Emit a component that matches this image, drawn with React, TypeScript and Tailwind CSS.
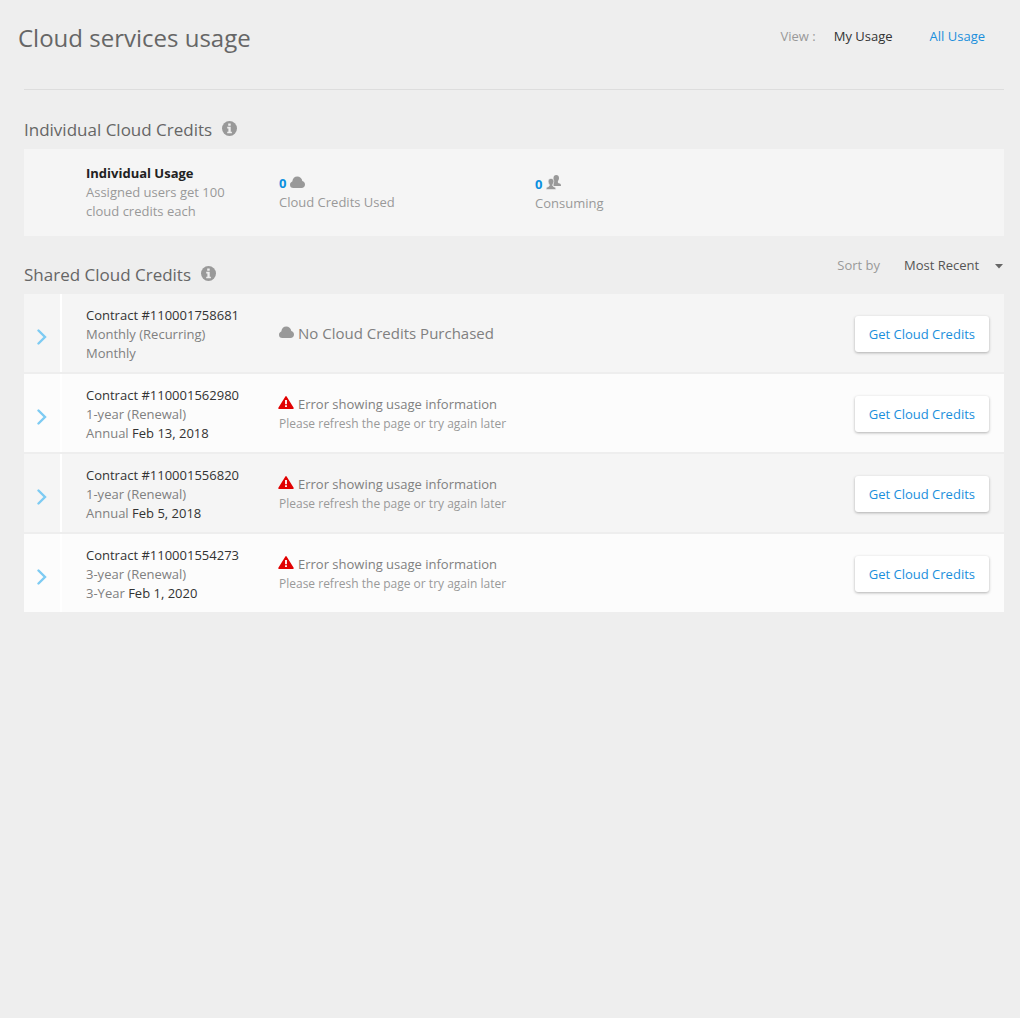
import { useState } from "react";

type Contract = {
  id: string;
  term: string;
  cycle: string;
  date?: string;
  failed: boolean;
};

const contracts: Contract[] = [
  { id: "110001758681", term: "Monthly (Recurring)", cycle: "Monthly", failed: false },
  { id: "110001562980", term: "1-year (Renewal)", cycle: "Annual", date: "Feb 13, 2018", failed: true },
  { id: "110001556820", term: "1-year (Renewal)", cycle: "Annual", date: "Feb 5, 2018", failed: true },
  { id: "110001554273", term: "3-year (Renewal)", cycle: "3-Year", date: "Feb 1, 2020", failed: true },
];

function InfoIcon() {
  return (
    <svg width="15" height="15" viewBox="0 0 15 15" aria-hidden="true">
      <circle cx="7.5" cy="7.5" r="7.5" fill="#999" />
      <path d="M6.2 2.5h2.5v2.2H6.2zM5.2 5.8h3.5v4.9h1.2v1.6H5.2v-1.6h1.2V7.4H5.2z" fill="#eee" />
    </svg>
  );
}

function CloudIcon() {
  return (
    <svg width="15" height="12" viewBox="0 0 15 12" fill="#999" aria-hidden="true">
      <path d="M3.4 12A3.4 3.4 0 0 1 0 8.7c0-1.5 1-2.7 2.3-3.1C2.6 2.4 4.6.5 7.3.5c2.5 0 4.5 1.6 5 4.4C13.9 5.3 15 6.8 15 8.4 15 10.4 13.5 12 11.5 12z" />
    </svg>
  );
}

function UsersIcon() {
  return (
    <svg width="15" height="15" viewBox="0 0 15 15" fill="#999" aria-hidden="true">
      <path d="M10.2 0c1.8 0 2.8 1.200 2.800 3 0 1.300-.5 2.300-1.100 3v1.400c.2.500.9.800 1.800 1.200.9.400 1.300 1 1.300 2.400H7.500V3C7.500 1.200 8.500 0 10.200 0z" />
      <path
        d="M5 3.400c1.800 0 2.800 1.200 2.800 3 0 1.300-.5 2.300-1.100 3v1.400c.2.500.9.800 1.800 1.200.9.400 1.300.9 1.300 2.600H.2c0-1.700.4-2.200 1.300-2.600.9-.4 1.600-.7 1.800-1.200V9.400c-.6-.7-1.100-1.700-1.100-3 0-1.800 1-3 2.800-3z"
        stroke="#f4f4f4"
        strokeWidth="0.6"
      />
    </svg>
  );
}

function WarningIcon() {
  return (
    <svg width="16" height="13" viewBox="0 0 16 13" aria-hidden="true">
      <path d="M8 .8 15 12.2H1z" fill="#e10000" stroke="#e10000" strokeWidth="1.5" strokeLinejoin="round" />
      <path d="M7.1 4h1.800v4.200H7.100zM7.100 9.200h1.800V11H7.100z" fill="#fff" />
    </svg>
  );
}

function ChevronIcon() {
  return (
    <svg width="10" height="16" viewBox="0 0 10 16" aria-hidden="true">
      <path d="M1.5 1.5 8 8l-6.500 6.500" fill="none" stroke="#7dcbf3" strokeWidth="2.4" strokeLinecap="round" />
    </svg>
  );
}

function SectionTitle({ children }: { children: string }) {
  return (
    <div className="flex items-center gap-2.5">
      <h2 className="text-[17px] leading-6 text-[#666]">{children}</h2>
      <button type="button" aria-label={`About ${children}`} className="-mt-1">
        <InfoIcon />
      </button>
    </div>
  );
}

function ContractRow({ contract }: { contract: Contract }) {
  return (
    <li className="flex min-h-[78px] bg-[#f5f5f5] text-[13px] leading-[19px] even:bg-[#fcfcfc]">
      <button
        type="button"
        aria-label={`Expand contract ${contract.id}`}
        className="flex w-[38px] shrink-0 items-center justify-center border-r-2 border-white pt-2"
      >
        <ChevronIcon />
      </button>
      <div className="flex grow items-center pt-0.5 pr-[15px] pl-6">
        <div className="w-[193px] shrink-0 text-[#808080]">
          <h3 className="text-[#333]">Contract #{contract.id}</h3>
          <p>{contract.term}</p>
          <p>
            {contract.cycle} {contract.date && <span className="text-[#333]">{contract.date}</span>}
          </p>
        </div>
        <div className="grow">
          {contract.failed ? (
            <>
              <p className="flex items-center gap-1 text-[#808080]">
                <span className="-ml-px pb-1">
                  <WarningIcon />
                </span>
                Error showing usage information
              </p>
              <p className="text-xs leading-[19px] text-[#999]">Please refresh the page or try again later</p>
            </>
          ) : (
            <p className="flex items-center gap-1 pb-0.5 text-[15px] text-[#808080]">
              <span className="pb-0.5">
                <CloudIcon />
              </span>
              No Cloud Credits Purchased
            </p>
          )}
        </div>
        <button
          type="button"
          className="h-9 shrink-0 rounded-[3px] bg-white px-3.5 text-[#1a8fdc] shadow-[0_1px_3px_rgba(0,0,0,0.3)]"
        >
          Get Cloud Credits
        </button>
      </div>
    </li>
  );
}

export default function App() {
  const [sort, setSort] = useState("recent");

  return (
    <main className="min-h-screen bg-[#eee] pr-4 pl-6 font-['Open_Sans',sans-serif] text-[13px] leading-[19px]">
      <header className="-ml-1.5 flex items-start justify-between pt-5 pr-[19px]">
        <h1 className="text-2xl leading-9 text-[#666]">Cloud services usage</h1>
        <nav aria-label="View" className="flex items-center pt-[7px]">
          <span className="pr-[18px] text-[#999]">View :</span>
          <a href="#my-usage" className="pr-[37px] text-[#333]">
            My Usage
          </a>
          <a href="#all-usage" className="text-[#1a8fdc]">
            All Usage
          </a>
        </nav>
      </header>
      <hr className="mt-[33px] border-[#ddd]" />

      <section className="pt-7">
        <SectionTitle>Individual Cloud Credits</SectionTitle>
        <div className="mt-[7px] flex h-[87px] bg-[#f5f5f5] pt-[15px] pl-[62px] text-[#999]">
          <div className="w-[193px] shrink-0 pr-12">
            <h3 className="font-bold text-[#222]">Individual Usage</h3>
            <p>Assigned users get 100 cloud credits each</p>
          </div>
          <div className="w-64 shrink-0 pt-2.5">
            <p className="flex items-center gap-1">
              <b className="text-[#0a90e0]">0</b>
              <span className="pb-1">
                <CloudIcon />
              </span>
            </p>
            <p>Cloud Credits Used</p>
          </div>
          <div className="pt-[11px]">
            <p className="flex h-[19px] items-center gap-1">
              <b className="text-[#0a90e0]">0</b>
              <span className="pb-1">
                <UsersIcon />
              </span>
            </p>
            <p>Consuming</p>
          </div>
        </div>
      </section>

      <section className="pt-5">
        <div className="flex items-start justify-between">
          <div className="pt-[7px]">
            <SectionTitle>Shared Cloud Credits</SectionTitle>
          </div>
          <div className="flex items-center">
            <label htmlFor="sort" className="pr-6 text-[#999]">
              Sort by
            </label>
            <div className="relative">
              <select
                id="sort"
                value={sort}
                onChange={(event) => setSort(event.target.value)}
                className="appearance-none pr-6 text-[#555]"
              >
                <option value="recent">Most Recent</option>
                <option value="oldest">Oldest</option>
              </select>
              <svg
                width="8"
                height="5"
                viewBox="0 0 8 5"
                aria-hidden="true"
                className="pointer-events-none absolute top-2 right-px"
              >
                <path d="M0 0h8L4 4.500z" fill="#666" />
              </svg>
            </div>
          </div>
        </div>
        <ul className="mt-[7px] flex flex-col gap-0.5">
          {contracts.map((contract) => (
            <ContractRow key={contract.id} contract={contract} />
          ))}
        </ul>
      </section>
    </main>
  );
}
